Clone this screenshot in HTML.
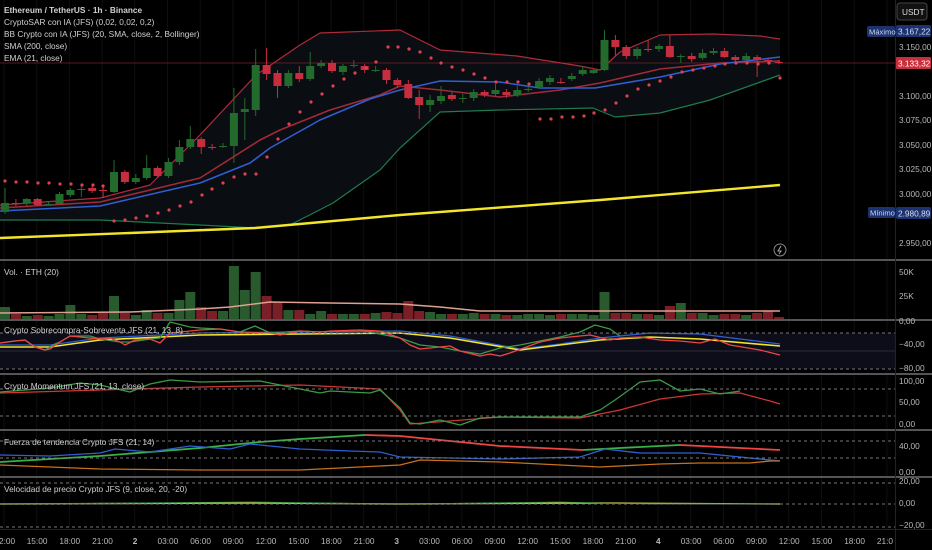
<!DOCTYPE html>
<html><head><meta charset="utf-8"><style>
html,body{margin:0;padding:0;background:#000;width:932px;height:550px;overflow:hidden}
svg{display:block}
text{font-family:"Liberation Sans",sans-serif}
</style></head><body>
<svg id="s" width="932" height="550" xmlns="http://www.w3.org/2000/svg">
<rect width="932" height="550" fill="#000"/>
<g id="grid" stroke="#0f0f12" stroke-width="1"></g>
<path id="bbfill" fill="#0a0d12" stroke="none"/>
<rect x="0" y="333" width="895" height="36" fill="#0d0d1a"/>
<line x1="0" y1="351" x2="895" y2="351" stroke="#2a2a38" stroke-width="1"/>
<line x1="0" y1="63" x2="895" y2="63" stroke="#5a1a22" stroke-width="1"/>
<g id="lines" fill="none" stroke-linejoin="round"></g>
<g id="candles"></g>
<g id="dots" fill="#e04050"></g>
<g id="vol"></g>
<g id="ind" fill="none" stroke-linejoin="round"></g>
<g stroke="#777" stroke-width="1" stroke-dasharray="3,3">
<line x1="0" y1="333" x2="895" y2="333"/><line x1="0" y1="369" x2="895" y2="369"/>
<line x1="0" y1="389" x2="895" y2="389"/><line x1="0" y1="416" x2="895" y2="416"/>
<line x1="0" y1="441" x2="895" y2="441"/><line x1="0" y1="458" x2="895" y2="458"/>
<line x1="0" y1="483" x2="895" y2="483"/><line x1="0" y1="504" x2="895" y2="504"/><line x1="0" y1="527" x2="895" y2="527"/>
</g>
<g fill="#555">
<rect x="0" y="259" width="932" height="2"/><rect x="0" y="319" width="932" height="2"/>
<rect x="0" y="373" width="932" height="2"/><rect x="0" y="429" width="932" height="2"/>
<rect x="0" y="476" width="932" height="2"/>
</g>
<rect x="0" y="529" width="932" height="1" fill="#222"/>
<rect x="895" y="0" width="1" height="550" fill="#222"/>
<g font-size="8.3" fill="#d0d0d0">
<text x="4" y="13" font-weight="bold">Ethereum / TetherUS · 1h · Binance</text>
<text x="4" y="25">CryptoSAR con IA (JFS) (0,02, 0,02, 0,2)</text>
<text x="4" y="37">BB Crypto con IA (JFS) (20, SMA, close, 2, Bollinger)</text>
<text x="4" y="49">SMA (200, close)</text>
<text x="4" y="61">EMA (21, close)</text>
<text x="4" y="275">Vol. · ETH (20)</text>
<text x="4" y="333">Crypto Sobrecompra-Sobreventa JFS (21, 13, 8)</text>
<text x="4" y="389">Crypto Momentum JFS (21, 13, close)</text>
<text x="4" y="445">Fuerza de tendencia Crypto JFS (21, 14)</text>
<text x="4" y="492">Velocidad de precio Crypto JFS (9, close, 20, -20)</text>
</g>
<g font-size="8.3" fill="#b8b8b8">
<text x="899" y="50">3.150,00</text><text x="899" y="99">3.100,00</text><text x="899" y="123">3.075,00</text>
<text x="899" y="148">3.050,00</text><text x="899" y="172">3.025,00</text><text x="899" y="197">3.000,00</text>
<text x="899" y="246">2.950,00</text>
<text x="899" y="275">50K</text><text x="899" y="299">25K</text>
<text x="899" y="324">0,00</text><text x="899" y="347">−40,00</text><text x="899" y="371">−80,00</text>
<text x="899" y="384">100,00</text><text x="899" y="405">50,00</text><text x="899" y="427">0,00</text>
<text x="899" y="449">40,00</text><text x="899" y="475">0,00</text>
<text x="899" y="484">20,00</text><text x="899" y="506">0,00</text><text x="899" y="528">−20,00</text>
</g>
<rect x="897" y="3" width="30" height="17" rx="3" fill="#111" stroke="#444"/>
<text x="902" y="15" font-size="8.3" fill="#ddd">USDT</text>
<rect x="867" y="26" width="28" height="11" rx="2" fill="#1c3370"/>
<text x="869" y="34.5" font-size="7.6" fill="#cfd6ee">Máximo</text>
<rect x="896" y="25" width="35" height="12" rx="2" fill="#1c3370"/>
<text x="898" y="34.5" font-size="8.3" fill="#dde">3.167,22</text>
<rect x="896" y="57" width="35" height="12" rx="1" fill="#c92e3c"/>
<text x="898" y="66.5" font-size="8.3" fill="#fff">3.133,32</text>
<rect x="868" y="207" width="27" height="11" rx="2" fill="#1c3370"/>
<text x="870" y="215.5" font-size="7.6" fill="#cfd6ee">Mínimo</text>
<rect x="896" y="207" width="35" height="12" rx="2" fill="#1c3370"/>
<text x="898" y="216.5" font-size="8.3" fill="#dde">2.980,89</text>
<circle cx="780" cy="250" r="6" fill="none" stroke="#888" stroke-width="1"/>
<path d="M781 246 L778 251 L781 251 L779 254" fill="none" stroke="#aaa" stroke-width="1"/>
<g id="time" font-size="8.3" fill="#b8b8b8"></g>
</svg>
<script>
var NS="http://www.w3.org/2000/svg";
function el(p,t,a){var e=document.createElementNS(NS,t);for(var k in a)e.setAttribute(k,a[k]);document.getElementById(p).appendChild(e);return e;}
function pts(a){var s="";for(var i=0;i<a.length;i+=2)s+=a[i]+","+a[i+1]+" ";return s;}
var C=[[212,203,188,214],[203,203,199,206],[203,199,198,206],[199,205,198,206],[204,204,202,206],[204,194,192,205],[195,190,188,197],[190,189,186,197],[188,191,186,193],[190,190,186,198],[192,172,160,193],[172,182,170,184],[182,178,174,184],[178,168,155,180],[168,176,166,178],[176,162,158,178],[162,147,140,165],[147,139,126,149],[139,147,137,154],[147,147,144,150],[146,146,143,148],[146,113,88,163],[112,109,98,140],[110,65,49,116],[65,74,48,80],[73,86,70,98],[86,73,70,88],[73,79,66,82],[79,66,52,81],[66,63,60,68],[63,71,60,73],[72,66,64,75],[65,65,60,68],[66,70,64,73],[70,70,66,72],[70,80,68,84],[80,85,78,88],[84,98,80,99],[97,105,90,119],[105,100,95,112],[101,96,86,104],[95,99,92,101],[98,98,94,103],[98,92,89,101],[92,95,90,97],[94,90,84,96],[92,95,89,98],[95,90,86,97],[89,89,86,92],[87,81,78,89],[82,78,75,85],[82,82,78,84],[79,76,73,81],[74,70,66,76],[73,70,68,74],[70,40,30,71],[40,47,35,56],[47,56,45,59],[56,49,47,59],[49,49,40,52],[49,46,44,52],[46,57,35,58],[57,56,54,63],[56,59,53,62],[58,53,49,60],[53,51,48,55],[51,57,48,58],[57,60,55,64],[60,56,53,62],[57,60,55,77],[60,61,58,63],[62,63,60,64]];
var X=function(i){return 5+i*10.9;};
var V=[307,314,316,315,316,314,305,314,315,313,296,313,315,310,313,313,300,292,307,311,311,266,290,272,296,302,310,310,314,311,314,314,314,314,313,312,313,301,311,312,314,314,314,313,314,314,315,315,314,314,315,314,314,314,315,292,313,313,314,314,315,306,303,313,313,315,314,314,315,313,311,317];
for(var i=0;i<C.length;i++){var c=C[i],x=X(i),g=c[1]<c[0]||(c[1]==c[0]&&i%2==0);var col=g?"#236a2d":"#c42e3e";
el("candles","line",{x1:x,y1:c[2],x2:x,y2:c[3],stroke:col,"stroke-width":1});
var t=Math.min(c[0],c[1]),h=Math.max(1,Math.abs(c[0]-c[1]));
el("candles","rect",{x:x-4,y:t,width:8,height:h,fill:col});
var vc=g?"#285a2d":"#7a1f28";el("vol","rect",{x:x-5,y:V[i],width:10,height:319-V[i],fill:vc});}
el("vol","polyline",{points:pts([0,313,130,312,200,309,230,307,270,302,330,303,400,304,440,307,480,311,600,311,780,311]),fill:"none",stroke:"#e0a090","stroke-width":1.5});
var up=[0,205,100,198,150,185,200,135,256,75,300,45,320,33,400,30,420,40,440,50,517,56,580,66,600,70,620,52,660,35,713,34,760,36,780,39];
var lo=[0,220,100,220,200,225,255,228,290,225,333,203,380,170,400,148,440,112,500,110,593,108,615,117,660,113,710,100,780,75];
var f="M"+pts(up).trim().replace(/ /g," L")+" L";var r=[];for(var i=lo.length-2;i>=0;i-=2)r.push(lo[i]+","+lo[i+1]);f+=r.join(" L")+" Z";
document.getElementById("bbfill").setAttribute("d",f);
el("lines","polyline",{points:pts(up),stroke:"#b02a3a","stroke-width":1.2});
el("lines","polyline",{points:pts(lo),stroke:"#1f7a4e","stroke-width":1.2});
el("lines","polyline",{points:pts([0,208,100,202,200,178,260,140,280,130,330,110,380,95,400,86,440,90,500,97,560,90,600,83,660,69,720,63,780,61]),stroke:"#a02a38","stroke-width":1.6});
el("lines","polyline",{points:pts([0,211,100,206,200,183,250,163,270,148,320,120,370,99,400,90,440,81,500,82,540,88,595,88,660,77,720,64,780,57]),stroke:"#2f5fd0","stroke-width":1.5});
el("lines","polyline",{points:pts([0,238,130,233,255,228,400,215,600,200,780,185]),stroke:"#f2e52a","stroke-width":2.4});
var D=[[5,181],[16,182],[27,182],[38,183],[49,183],[60,184],[71,184],[82,185],[93,185],[103,186],[114,221],[125,220],[136,218],[147,216],[158,213],[169,210],[180,206],[191,202],[202,195],[212,189],[223,183],[234,177],[245,174],[256,174],[267,157],[278,139],[289,124],[300,112],[311,102],[322,94],[333,86],[344,79],[355,73],[366,68],[376,62],[388,47],[398,47],[409,49],[420,52],[431,58],[441,63],[452,67],[463,70],[474,74],[485,78],[496,82],[507,82],[518,82],[529,84],[540,119],[551,119],[562,117],[573,117],[584,116],[594,113],[605,110],[616,103],[627,96],[638,89],[649,85],[660,81],[671,77],[682,72],[693,70],[704,68],[715,66],[725,64],[736,63],[747,63],[758,64],[769,63],[780,78]];
D.forEach(function(d){el("dots","circle",{cx:d[0],cy:d[1],r:1.6});});
function L(a,c,w){el("ind","polyline",{points:pts(a),stroke:c,"stroke-width":w||1.3});}
L([0,345,50,345,100,338,200,333,300,332,400,331,450,336,520,349,560,344,600,338,650,333,700,334,780,344],"#2f5fd0");
L([0,347,50,347,100,340,200,335,300,334,400,333,450,338,520,350,560,345,600,340,650,337,700,339,780,346],"#f2e52a",1.6);
L([0,343,15,341,25,340,35,347,45,350,55,344,60,342,70,336,90,336,100,339,120,342,130,342,150,339,160,338,170,322,190,327,200,328,220,329,240,332,255,326,270,333,300,331,320,332,360,330,400,338,420,345,440,347,460,351,480,354,500,348,520,345,540,341,560,337,580,332,595,325,610,329,620,336],"#3a9a45");
L([0,343,15,341,25,340,35,347,45,350,50,349,60,342,70,336,100,339,110,338,120,342,125,345,135,340,150,339,160,343,170,333,200,330,220,329,240,332,270,333,280,335,300,331,320,332,330,331,360,330,380,331,400,338,410,345,420,349,440,347,450,346,460,351,480,356,490,354,500,356,510,353,540,342,560,338,590,335,610,340,620,338,640,337,660,340,680,341,700,343,715,339,730,345,760,350,780,355],"#f04545");
L([0,393,100,390,200,387,300,385,380,389,400,410,410,424,450,421,500,417,580,418,620,410,660,399,700,394,740,393,770,401,780,404],"#d03535");
L([0,392,50,388,80,383,100,385,130,392,150,384,170,380,200,382,260,381,300,389,320,393,330,391,370,393,380,390,400,408,410,423,420,424,440,420,460,425,480,418,500,417,580,417,600,410,615,400,640,382,660,380,680,391,700,389,720,394,740,391],"#3a9a45");
L([0,462,100,456,200,448,260,442,300,439,365,435],"#3ab04a",1.8);
L([365,435,400,436,500,446,583,450],"#f04545",1.8);
L([583,450,620,448,680,445],"#3ab04a",1.8);
L([680,445,780,450],"#f04545",1.8);
L([0,455,50,456,100,453,115,449,150,452,190,446,230,449,250,444,300,449,350,451,380,452,400,457,500,459,580,457,605,449,640,453,700,453,780,461],"#2f5fd0");
L([0,465,100,469,200,470,270,470,300,470,400,465,420,460,500,462,600,467,660,464,700,463,750,463,770,461,780,461],"#c8701a");
L([0,504,250,503,400,504,600,503,780,504],"#c9c040",1.4);
L([0,504,250,502,400,504,560,502,600,503,650,504,780,504],"#3a9a45",0.8);
var T=["2:00","15:00","18:00","21:00","2","03:00","06:00","09:00","12:00","15:00","18:00","21:00","3","03:00","06:00","09:00","12:00","15:00","18:00","21:00","4","03:00","06:00","09:00","12:00","15:00","18:00","21:0"];
T.forEach(function(t,i){var x=4+i*32.7;var bold=(t.length==1);
var e=el("time","text",{x:(i==0?-1:x-(t.length>2?10:2)),y:544});if(bold)e.setAttribute("font-weight","bold");e.textContent=t;
el("grid","line",{x1:x,y1:0,x2:x,y2:529});});
</script>
</body></html>
